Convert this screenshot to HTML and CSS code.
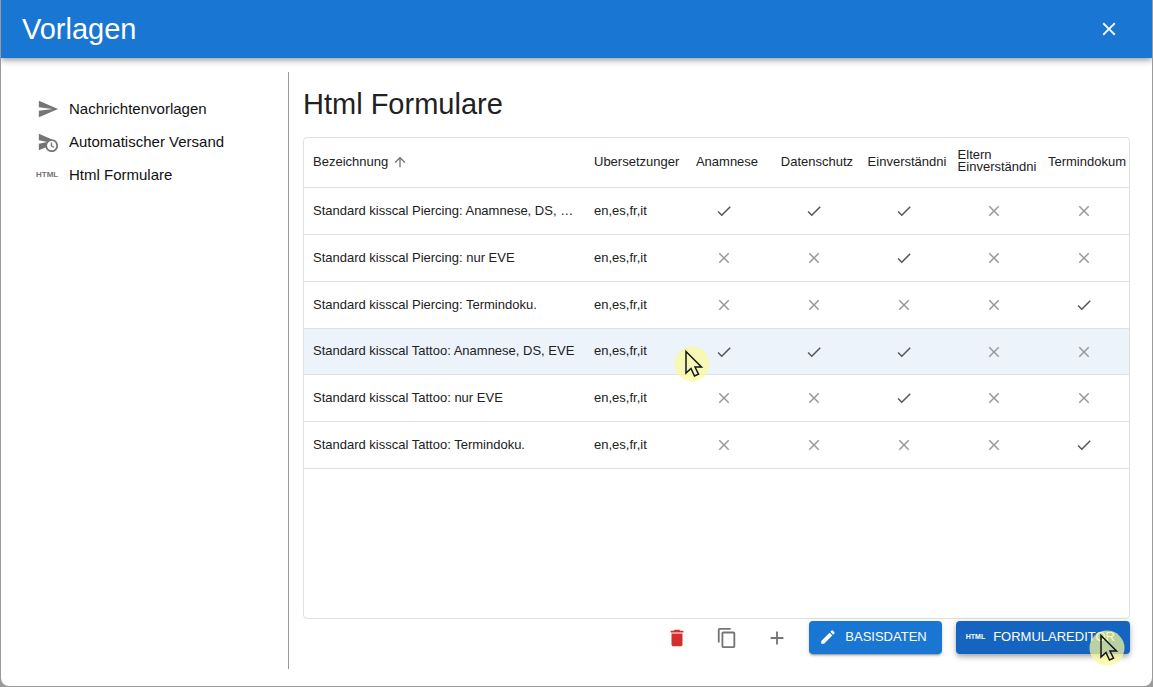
FILE: index.html
```html
<!DOCTYPE html>
<html lang="de">
<head>
<meta charset="utf-8">
<title>Vorlagen</title>
<link rel="stylesheet" href="styles.css">
<script src="table.js" defer></script>
</head>
<body>
<svg class="symbols" aria-hidden="true">
  <symbol id="check" viewBox="0 0 24 24"><path d="M9 16.17 4.83 12l-1.42 1.41L9 19 21 7l-1.41-1.41z"/></symbol>
  <symbol id="close" viewBox="0 0 24 24"><path d="M19 6.41 17.59 5 12 10.59 6.41 5 5 6.41 10.59 12 5 17.59 6.41 19 12 13.41 17.59 19 19 17.59 13.41 12z"/></symbol>
  <symbol id="cursor" viewBox="0 0 36 36"><circle cx="18" cy="18" r="17.500" fill="#fafa98" fill-opacity=".73"/><path d="M12 5.500v21.500l5-4.500 3.500 7.500 4-1.800-3.500-7.200h6.500z" fill="none" stroke="#11151c" stroke-width="1.500"/></symbol>
</svg>
<div class="dialog" role="dialog" aria-labelledby="dialog-title">
  <header class="bar">
    <h1 id="dialog-title">Vorlagen</h1>
    <button class="icon-button light" type="button" aria-label="Schließen"><svg class="icon22"><use href="#close"/></svg></button>
  </header>
  <div class="body">
    <nav class="side">
      <a href="#nachrichten"><span class="slot"><svg class="icon22" viewBox="0 0 24 24"><path d="M2.010 21 23 12 2.010 3 2 10l15 2-15 2z"/></svg></span>Nachrichtenvorlagen</a>
      <a href="#versand"><span class="slot"><svg class="icon22" viewBox="0 0 24 24"><path d="M16.500 12.500H15v4l3 2 .750-1.230-2.250-1.520zM16 9 2 3v7l9 2-9 2v7l7.270-3.110C10.090 20.830 12.790 23 16 23c3.860 0 7-3.140 7-7s-3.140-7-7-7m0 12c-2.750 0-4.980-2.220-5-4.970v-.070c.020-2.740 2.250-4.970 5-4.970 2.760 0 5 2.240 5 5S18.760 21 16 21"/></svg></span>Automatischer Versand</a>
      <a href="#formulare"><span class="slot tag" aria-hidden="true">HTML</span>Html Formulare</a>
    </nav>
    <main class="content">
      <h2>Html Formulare</h2>
      <div class="grid">
        <table>
          <colgroup><col><col class="lang"><col class="flag"><col class="flag"><col class="flag"><col class="flag"><col class="flag"></colgroup>
          <thead><tr>
            <th scope="col"><span class="sort">Bezeichnung<svg class="icon16" viewBox="0 0 24 24"><path d="m4 12 1.410 1.410L11 7.830V20h2V7.830l5.580 5.590L20 12l-8-8z"/></svg></span></th>
            <th scope="col" class="lang-head">Ubersetzunger</th>
            <th scope="col" class="mid">Anamnese</th>
            <th scope="col" class="mid">Datenschutz</th>
            <th scope="col" class="mid">Einverständni</th>
            <th scope="col" class="mid"><span class="two">Eltern<br>Einverständni</span></th>
            <th scope="col" class="mid">Termindokum</th>
          </tr></thead>
          <tbody id="rows"></tbody>
        </table>
      </div>
      <footer class="actions">
        <button class="icon-button red" type="button" aria-label="Löschen"><svg class="icon22" viewBox="0 0 24 24"><path d="M6 19c0 1.100.9 2 2 2h8c1.100 0 2-.9 2-2V7H6zM19 4h-3.500l-1-1h-5l-1 1H5v2h14z"/></svg></button>
        <button class="icon-button" type="button" aria-label="Kopieren"><svg class="icon22" viewBox="0 0 24 24"><path d="M16 1H4c-1.100 0-2 .9-2 2v14h2V3h12zm3 4H8c-1.100 0-2 .9-2 2v14c0 1.100.9 2 2 2h11c1.100 0 2-.9 2-2V7c0-1.100-.9-2-2-2m0 16H8V7h11z"/></svg></button>
        <button class="icon-button" type="button" aria-label="Hinzufügen"><svg class="icon22" viewBox="0 0 24 24"><path d="M19 13h-6v6h-2v-6H5v-2h6V5h2v6h6z"/></svg></button>
        <button class="button" type="button"><svg class="icon18" viewBox="0 0 24 24"><path d="M3 17.250V21h3.750L17.810 9.940l-3.750-3.750zM20.710 7.040c.390-.390.390-1.020 0-1.410l-2.340-2.340a.996.996 0 0 0-1.410 0l-1.830 1.830 3.750 3.750z"/></svg>BASISDATEN</button>
        <button class="button hover" type="button"><span class="tag small" aria-hidden="true">HTML</span>FORMULAREDITOR<svg class="cursor on-button"><use href="#cursor"/></svg></button>
      </footer>
    </main>
  </div>
</div>
</body>
</html>
```
FILE: table.js
```javascript
const rows = [
  ["Standard kisscal Piercing: Anamnese, DS, EVE", "11100"],
  ["Standard kisscal Piercing: nur EVE", "00100"],
  ["Standard kisscal Piercing: Termindoku.", "00001"],
  ["Standard kisscal Tattoo: Anamnese, DS, EVE", "11100", true],
  ["Standard kisscal Tattoo: nur EVE", "00100"],
  ["Standard kisscal Tattoo: Termindoku.", "00001"]
];
const flag = f => f === "1"
  ? '<td class="mid"><svg class="icon18 yes" role="img" aria-label="Ja"><use href="#check"/></svg></td>'
  : '<td class="mid"><svg class="icon18 no" role="img" aria-label="Nein"><use href="#close"/></svg></td>';
document.getElementById("rows").innerHTML = rows.map(([name, flags, selected]) =>
  `<tr${selected ? ' class="selected"' : ""}><td>${name}</td><td class="lang-cell">en,es,fr,it${selected ? '<svg class="cursor on-row"><use href="#cursor"/></svg>' : ""}</td>${[...flags].map(flag).join("")}</tr>`
).join("");
```
FILE: styles.css
```css
* { box-sizing: border-box; }
body {
  margin: 0;
  padding: 0 1px 1px;
  height: 100vh;
  background: #9b9b9b;
  color: #212121;
  font-family: "Liberation Sans", Arial, sans-serif;
  font-size: 15px;
}
svg { display: block; fill: currentColor; flex: none; }
.symbols { position: absolute; width: 0; height: 0; }
.icon16 { width: 16px; height: 16px; }
.icon18 { width: 18px; height: 18px; }
.icon22 { width: 22px; height: 22px; }

.dialog {
  height: 100%;
  display: flex;
  flex-direction: column;
  background: #fff;
  border-radius: 0 0 8px 8px;
  overflow: hidden;
}
.bar {
  display: flex;
  align-items: center;
  justify-content: space-between;
  height: 58px;
  flex: none;
  padding: 0 25px 0 21px;
  background: #1976d2;
  color: #fff;
  box-shadow: 0 2px 4px -1px rgba(0,0,0,.2), 0 4px 5px rgba(0,0,0,.14), 0 1px 10px rgba(0,0,0,.12);
}
h1, h2 { margin: 0; font-weight: 400; }
h1 { font-size: 29px; line-height: 36px; }
h2 { font-size: 29px; line-height: 36px; margin-bottom: 15px; }

.body { flex: 1; min-height: 0; display: flex; padding: 14px 22px 17px 0; }
.side {
  width: 288px;
  flex: none;
  border-right: 1px solid #999;
  padding: 20px 0 0 34px;
}
.side a {
  display: flex;
  align-items: center;
  height: 33px;
  color: #111;
  text-decoration: none;
}
.slot { width: 34px; flex: none; color: #757575; padding-left: 2px; }
.tag { font-size: 8px; line-height: 8px; font-weight: 700; }
.tag.slot { padding-left: 1px; }

.content {
  flex: 1;
  min-width: 0;
  display: flex;
  flex-direction: column;
  padding: 14px 0 15px 14px;
}
.grid {
  flex: 1;
  min-height: 0;
  border: 1px solid #e0e0e0;
  border-radius: 4px;
}
table { width: 100%; table-layout: fixed; border-collapse: separate; border-spacing: 0; font-size: 13px; }
.lang { width: 94px; }
.flag { width: 90px; }
th, td {
  padding: 0 9px 2px;
  height: 47px;
  border-bottom: 1px solid #e0e0e0;
  font-weight: 400;
  text-align: left;
  white-space: nowrap;
  overflow: hidden;
  text-overflow: ellipsis;
}
th { height: 50px; }
th.lang-head { padding-right: 0; overflow: visible; }
td.mid { padding: 0; text-align: center; }
th.mid { padding: 0 0 2px 6px; text-align: center; }
td.mid svg { margin: 0 auto; }
.sort { display: flex; align-items: center; gap: 4px; }
.sort svg { color: #757575; }
.two { display: inline-block; text-align: left; line-height: 12px; }
.yes { color: #555; }
.no { color: #999; }
.selected { background: #ecf3fb; }
.selected td { height: 46px; }
.lang-cell { position: relative; overflow: visible; }

.actions { display: flex; align-items: center; justify-content: flex-end; padding-top: 2px; }
.icon-button {
  border: 0;
  height: 33px;
  padding: 0 7px;
  margin-right: 14px;
  background: none;
  color: #757575;
}
.icon-button.light { color: #fff; margin: 0; }
.icon-button.red { color: #d32f2f; }
.button {
  display: flex;
  align-items: center;
  gap: 8px;
  height: 33px;
  padding: 0 15px 2px 10px;
  border: 0;
  border-radius: 4px;
  background: #1976d2;
  color: #fff;
  font: 13px "Liberation Sans", Arial, sans-serif;
  box-shadow: 0 3px 1px -2px rgba(0,0,0,.2), 0 2px 2px rgba(0,0,0,.14), 0 1px 5px rgba(0,0,0,.12);
}
.button.hover {
  position: relative;
  margin-left: 14px;
  background: #1565c0;
  box-shadow: 0 2px 4px -1px rgba(0,0,0,.2), 0 4px 5px rgba(0,0,0,.14), 0 1px 10px rgba(0,0,0,.12);
}
.tag.small { font-size: 7px; }
.cursor { position: absolute; width: 36px; height: 36px; pointer-events: none; }
.on-button { right: 5px; top: 9px; }
.on-row { right: -31px; top: 17px; z-index: 1; }
```
